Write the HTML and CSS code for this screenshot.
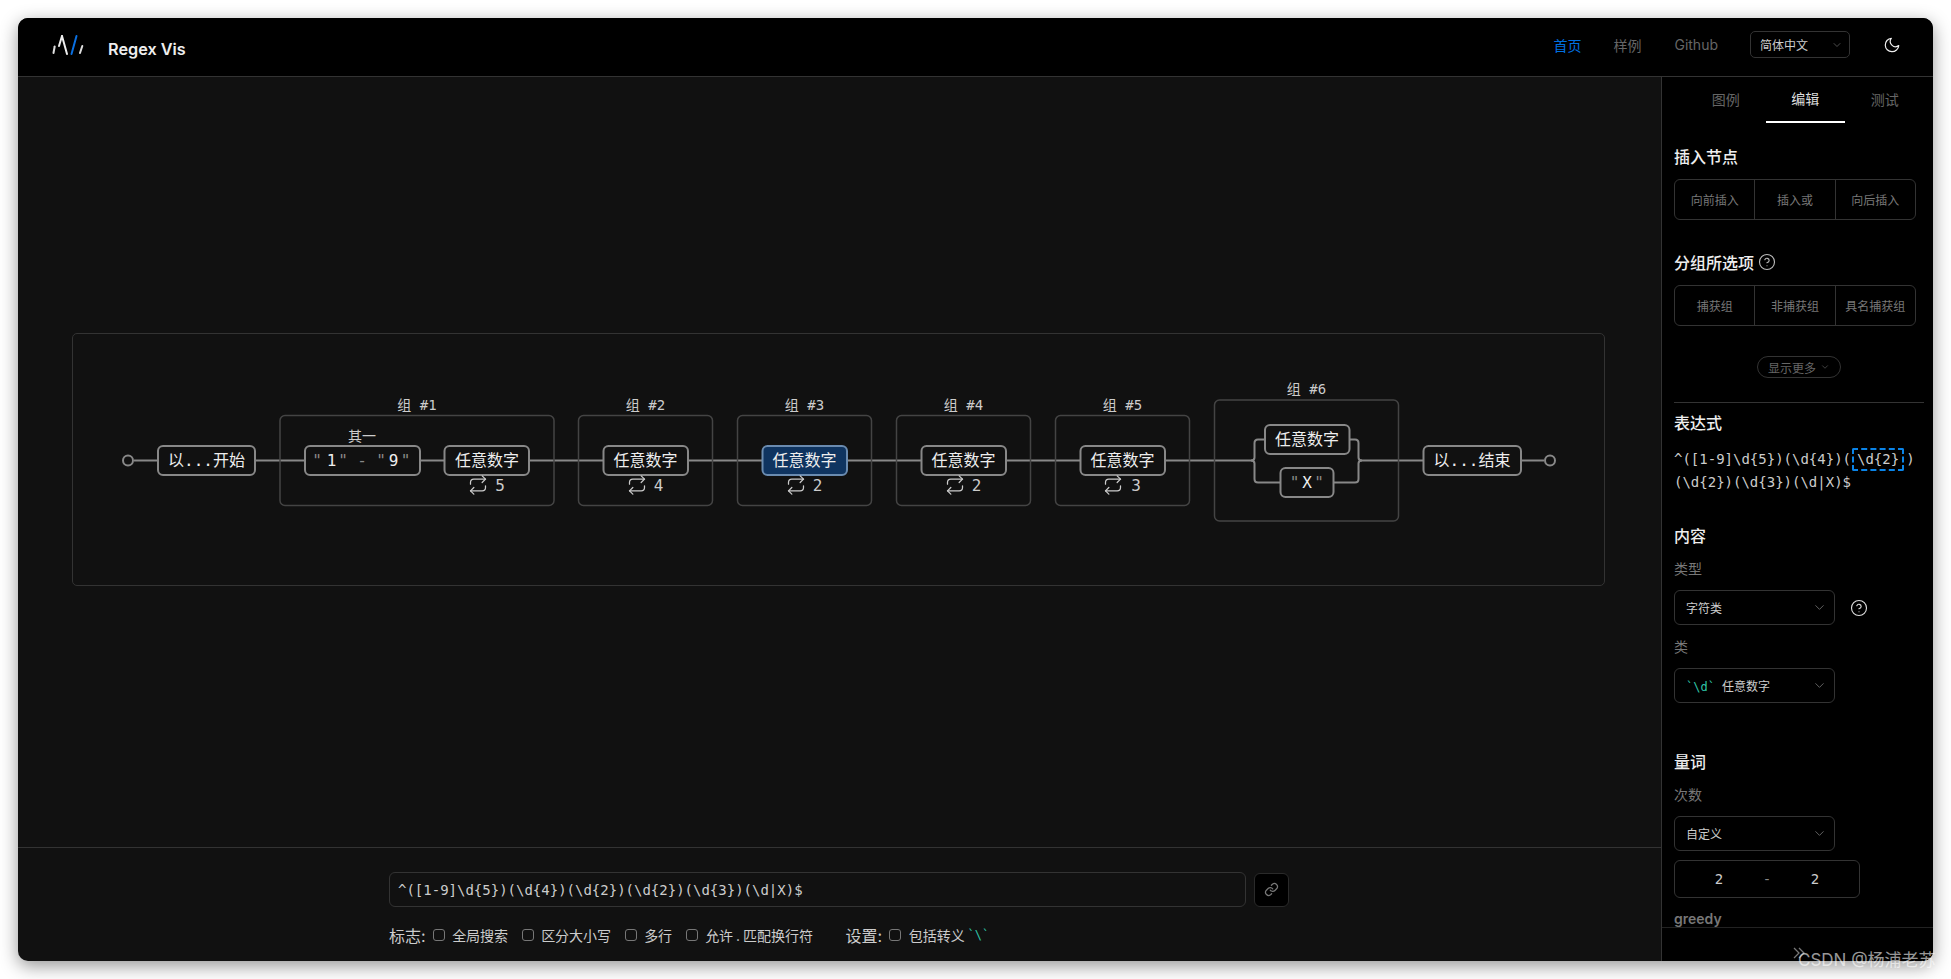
FILE: index.html
```html
<!DOCTYPE html>
<html lang="zh-CN">
  <head>
    <meta charset="utf-8">
    <title>Regex Vis</title>
    <link rel="stylesheet" href="styles.css">
  </head>
  <body>
    <svg class="defs" width="0" height="0">
      <symbol id="i-repeat" viewBox="0 0 24 24">
        <polyline points="17 1 21 5 17 9"></polyline>
        <path d="M3 11V9a4 4 0 0 1 4-4h14"></path>
        <polyline points="7 23 3 19 7 15"></polyline>
        <path d="M21 13v2a4 4 0 0 1-4 4H3"></path>
      </symbol>
      <symbol id="i-chevron" viewBox="0 0 24 24">
        <polyline points="6 9 12 15 18 9"></polyline>
      </symbol>
      <symbol id="i-help" viewBox="0 0 24 24">
        <circle cx="12" cy="12" r="10"></circle>
        <path d="M9.100 9a3 3 0 0 1 5.800 1c0 2-3 3-3 3"></path>
        <line x1="12" y1="17" x2="12" y2="17"></line>
      </symbol>
    </svg>

    <div class="window">
      <header class="topbar">
        <div class="brand">
          <svg class="logo" width="34" height="22" viewBox="0 0 34 22">
            <line x1="1.500" y1="19" x2="2.700" y2="12.500" stroke="#ddd"></line>
            <line x1="7" y1="12" x2="10" y2="2" stroke="#eee"></line>
            <line x1="10" y1="2" x2="15" y2="20" stroke="#eee"></line>
            <line x1="19.500" y1="20" x2="24.500" y2="2" stroke="#0a6fe0"></line>
            <line x1="28" y1="19" x2="30.300" y2="12" stroke="#ddd"></line>
          </svg>
          <span class="brand-name">Regex Vis</span>
        </div>
        <nav class="nav">
          <a class="nav-link active">首页</a>
          <a class="nav-link">样例</a>
          <a class="nav-link">Github</a>
          <div class="lang">
            <span>简体中文</span>
            <svg class="chevron" width="12" height="12"><use href="#i-chevron"></use></svg>
          </div>
          <svg class="moon" width="18" height="18" viewBox="0 0 24 24">
            <path d="M21 12.800A9 9 0 1 1 11.200 3a7 7 0 0 0 9.800 9.800z"></path>
          </svg>
        </nav>
      </header>

      <div class="content">
        <main class="main">
          <section class="canvas">
            <div class="graph-frame">
              <svg class="graph" width="1531" height="251" viewBox="73 334 1531 251">
                <!-- connecting lines run under the boxes -->
                <g class="wire">
                  <path d="M134 460.500H1251"></path>
                  <path d="M1362 460.500H1544"></path>
                  <path d="M1251 460.500c2 0 3.500-1 3.500-3V443c0-2.500 1-3.500 3.500-3.500h7"></path>
                  <path d="M1251 460.500c2 0 3.500 1 3.500 3V479c0 2.500 1 3.500 3.500 3.500h22.500"></path>
                  <path d="M1349.500 439.500h5.500c2.500 0 3.500 1 3.500 3.500v14.500c0 2 1.500 3 3.500 3"></path>
                  <path d="M1333.500 482.500H1355c2.500 0 3.500-1 3.500-3.500v-15.500c0-2 1.500-3 3.500-3"></path>
                </g>
                <circle class="terminal" cx="128" cy="460.500" r="5"></circle>
                <circle class="terminal" cx="1550" cy="460.500" r="5"></circle>

                <g class="group-box">
                  <rect x="280" y="415.500" width="274" height="90" rx="5"></rect>
                  <rect x="578.500" y="415.500" width="134" height="90" rx="5"></rect>
                  <rect x="737.500" y="415.500" width="134" height="90" rx="5"></rect>
                  <rect x="896.500" y="415.500" width="134" height="90" rx="5"></rect>
                  <rect x="1055.500" y="415.500" width="134" height="90" rx="5"></rect>
                  <rect x="1214.500" y="400" width="184" height="121" rx="5"></rect>
                </g>

                <g class="small-label">
                  <text x="417" y="410">组 #1</text>
                  <text x="362" y="441">其一</text>
                  <text x="645.500" y="410">组 #2</text>
                  <text x="804.500" y="410">组 #3</text>
                  <text x="963.500" y="410">组 #4</text>
                  <text x="1122.500" y="410">组 #5</text>
                  <text x="1306.500" y="393.500">组 #6</text>
                </g>

                <g class="node">
                  <rect x="158" y="446" width="97" height="29" rx="5"></rect>
                  <rect x="305" y="446" width="115" height="29" rx="5"></rect>
                  <rect x="444.500" y="446" width="84.500" height="29" rx="5"></rect>
                  <rect x="603.500" y="446" width="84.500" height="29" rx="5"></rect>
                  <rect class="selected" x="762.500" y="446" width="84.500" height="29" rx="5"></rect>
                  <rect x="921.500" y="446" width="84.500" height="29" rx="5"></rect>
                  <rect x="1080.500" y="446" width="84.500" height="29" rx="5"></rect>
                  <rect x="1265" y="425" width="84.500" height="29" rx="5"></rect>
                  <rect x="1280.500" y="468" width="53" height="29" rx="5"></rect>
                  <rect x="1423.500" y="446" width="97.500" height="29" rx="5"></rect>
                </g>

                <g class="node-text">
                  <text x="206.500" y="466">以...开始</text>
                  <text x="487" y="466">任意数字</text>
                  <text x="645.500" y="466">任意数字</text>
                  <text x="804.500" y="466">任意数字</text>
                  <text x="963.500" y="466">任意数字</text>
                  <text x="1122.500" y="466">任意数字</text>
                  <text x="1307" y="445">任意数字</text>
                  <text x="1472" y="466">以...结束</text>
                  <text y="466"><tspan class="dim" x="317">"</tspan><tspan x="331.500">1</tspan><tspan class="dim" x="343">"</tspan><tspan class="dim" x="362">-</tspan><tspan class="dim" x="381">"</tspan><tspan x="393.500">9</tspan><tspan class="dim" x="405.500">"</tspan></text>
                  <text y="488"><tspan class="dim" x="1294.500">"</tspan><tspan x="1307">X</tspan><tspan class="dim" x="1319">"</tspan></text>
                </g>

                <g class="icon-repeat">
                  <use href="#i-repeat" x="468" y="475" width="20" height="20"></use>
                  <use href="#i-repeat" x="627" y="475" width="20" height="20"></use>
                  <use href="#i-repeat" x="786" y="475" width="20" height="20"></use>
                  <use href="#i-repeat" x="945" y="475" width="20" height="20"></use>
                  <use href="#i-repeat" x="1103" y="475" width="20" height="20"></use>
                </g>
                <g class="repeat-count">
                  <text x="500" y="490.500">5</text>
                  <text x="658.500" y="490.500">4</text>
                  <text x="817.500" y="490.500">2</text>
                  <text x="976.500" y="490.500">2</text>
                  <text x="1136" y="490.500">3</text>
                </g>
              </svg>
            </div>
          </section>

          <section class="editor">
            <div class="editor-row">
              <input class="regex-input" type="text" value="^([1-9]\d{5})(\d{4})(\d{2})(\d{2})(\d{3})(\d|X)$">
              <button class="link-btn">
                <svg width="15" height="15" viewBox="0 0 24 24">
                  <path d="M10 13a5 5 0 0 0 7.500.5l3-3a5 5 0 0 0-7-7l-1.700 1.700"></path>
                  <path d="M14 11a5 5 0 0 0-7.500-.5l-3 3a5 5 0 0 0 7 7l1.700-1.700"></path>
                </svg>
              </button>
            </div>
            <div class="flags">
              <span class="flags-title">标志:</span>
              <label class="flag"><input type="checkbox">全局搜索</label>
              <label class="flag"><input type="checkbox">区分大小写</label>
              <label class="flag"><input type="checkbox">多行</label>
              <label class="flag"><input type="checkbox">允许 . 匹配换行符</label>
              <span class="flags-title settings">设置:</span>
              <label class="flag"><input type="checkbox">包括转义 <code class="green">`\`</code></label>
            </div>
          </section>
        </main>

        <aside class="sidebar">
          <div class="panel">
            <div class="tabs">
              <a class="tab">图例</a>
              <a class="tab current">编辑</a>
              <a class="tab">测试</a>
            </div>

            <h4 class="title first">插入节点</h4>
            <div class="btn-group">
              <button>向前插入</button>
              <button>插入或</button>
              <button>向后插入</button>
            </div>

            <h4 class="title second">分组所选项
              <svg class="help" width="18" height="18"><use href="#i-help"></use></svg>
            </h4>
            <div class="btn-group">
              <button>捕获组</button>
              <button>非捕获组</button>
              <button>具名捕获组</button>
            </div>

            <div class="more-wrap">
              <button class="more">显示更多
                <svg class="chevron" width="10" height="10"><use href="#i-chevron"></use></svg>
              </button>
            </div>
            <hr class="rule">

            <h4 class="title expr-title">表达式</h4>
            <div class="expr">^([1-9]\d{5})(\d{4})(<span class="expr-pick">\d{2}</span>)<br>(\d{2})(\d{3})(\d|X)$</div>

            <h4 class="title block-title">内容</h4>
            <div class="field-label">类型</div>
            <div class="field-row">
              <div class="picker">
                <span>字符类</span>
                <svg class="chevron" width="15" height="15"><use href="#i-chevron"></use></svg>
              </div>
              <svg class="help light" width="18" height="18"><use href="#i-help"></use></svg>
            </div>
            <div class="field-label spaced">类</div>
            <div class="picker">
              <span><code class="green">`\d`</code><span class="picker-note">任意数字</span></span>
              <svg class="chevron" width="15" height="15"><use href="#i-chevron"></use></svg>
            </div>

            <h4 class="title quant-title">量词</h4>
            <div class="field-label">次数</div>
            <div class="picker">
              <span>自定义</span>
              <svg class="chevron" width="15" height="15"><use href="#i-chevron"></use></svg>
            </div>
            <div class="range">
              <span>2</span>
              <span class="range-dash">-</span>
              <span>2</span>
            </div>
            <div class="greedy">greedy</div>
          </div>
          <footer class="collapse">
            <svg width="12" height="12" viewBox="0 0 12 12">
              <polyline points="1 1 6 6 1 11"></polyline>
              <polyline points="6 1 11 6 6 11"></polyline>
            </svg>
          </footer>
        </aside>
      </div>
    </div>

    <div class="watermark">CSDN @杨浦老苏</div>
  </body>
</html>
```

FILE: styles.css
```css
* {
  box-sizing: border-box;
}
html, body {
  height: 100%;
}
body {
  margin: 0;
  padding: 18px;
  background-color: #fff;
  font-family: "Inter", "Noto Sans CJK SC", sans-serif;
  overflow: hidden;
  position: relative;
}
button, input {
  font-family: inherit;
}
code {
  font-family: "DejaVu Sans Mono", monospace;
}
.defs {
  position: absolute;
}
symbol {
  fill: none;
  stroke: currentColor;
  stroke-width: 1.5;
  stroke-linecap: round;
  stroke-linejoin: round;
}

.window {
  height: 943px;
  display: flex;
  flex-direction: column;
  border-radius: 10px;
  overflow: hidden;
  background-color: #111;
  box-shadow: 0 5px 18px rgba(0, 0, 0, .42);
}

/* top bar */
.topbar {
  height: 59px;
  flex: none;
  display: flex;
  justify-content: space-between;
  align-items: center;
  background-color: #000;
  border-bottom: 1px solid #333;
  padding: 0 32px 0 34px;
}
.brand {
  display: flex;
  align-items: center;
  gap: 22px;
}
.logo {
  margin-bottom: 4px;
}
.logo line {
  stroke-width: 2;
  stroke-linecap: round;
}
.brand-name {
  margin-top: 4px;
  color: #eee;
  font-size: 16.250px;
  font-weight: 600;
}
.nav {
  display: flex;
  align-items: center;
  margin-bottom: 5px;
}
.nav-link {
  font-size: 14px;
  color: #666;
  margin-right: 33px;
}
.nav-link.active {
  color: #0070e0;
  margin-right: 32px;
}
.nav-link:nth-child(3) {
  margin-right: 32px;
}
.lang {
  width: 100px;
  height: 27px;
  display: flex;
  justify-content: space-between;
  align-items: center;
  border: 1px solid #333;
  border-radius: 5px;
  padding: 0 6px 0 9px;
  color: #ccc;
  font-size: 12px;
}
.chevron {
  color: #666;
}
.moon {
  margin-left: 33px;
  fill: none;
  stroke: #eee;
  stroke-width: 1.6;
  stroke-linecap: round;
  stroke-linejoin: round;
}

.content {
  flex: 1;
  display: flex;
  min-height: 0;
}
.main {
  flex: 1;
  display: flex;
  flex-direction: column;
  min-width: 0;
}

/* regex graph */
.canvas {
  flex: 1;
  display: flex;
  align-items: center;
  padding: 0 0 5px 54px;
}
.graph-frame {
  width: 1533px;
  height: 253px;
  border: 1px solid #333;
  border-radius: 5px;
}
.graph {
  display: block;
}
.graph text {
  font-family: "DejaVu Sans Mono", "Noto Sans CJK SC", monospace;
  text-anchor: middle;
}
.wire path {
  fill: none;
  stroke: #888;
  stroke-width: 2;
}
.terminal {
  fill: #111;
  stroke: #888;
  stroke-width: 2;
}
.group-box rect {
  fill: none;
  stroke: #444;
  stroke-width: 1.500;
}
.node rect {
  fill: #111;
  stroke: #888;
  stroke-width: 2;
}
.node rect.selected {
  fill: #0f3460;
  stroke: #6a8bb0;
}
.node-text text {
  fill: #eee;
  font-size: 16px;
}
.node-text .dim {
  fill: #888;
}
.small-label text {
  fill: #ccc;
  font-size: 14px;
}
.repeat-count text {
  fill: #ccc;
  font-size: 16px;
}
.icon-repeat {
  color: #ccc;
}

/* regex input and flags */
.editor {
  height: 114px;
  flex: none;
  border-top: 1px solid #333;
  padding: 24px 0 0 371px;
}
.editor-row {
  display: flex;
  align-items: center;
  gap: 8px;
}
.regex-input {
  width: 857px;
  height: 35px;
  background-color: #111;
  border: 1px solid #333;
  border-radius: 6px;
  padding: 0 8px;
  color: #ccc;
  font-family: "DejaVu Sans Mono", monospace;
  font-size: 14px;
}
.link-btn {
  width: 35px;
  height: 34px;
  display: flex;
  align-items: center;
  justify-content: center;
  background-color: #000;
  border: 1px solid #2a2a2a;
  border-radius: 6px;
  padding: 0;
}
.link-btn svg {
  fill: none;
  stroke: #777;
  stroke-width: 2;
  stroke-linecap: round;
  stroke-linejoin: round;
}
.flags {
  display: flex;
  align-items: center;
  margin-top: 16px;
  color: #ccc;
  font-size: 14px;
}
.flags-title {
  margin-right: 7px;
  font-size: 16px;
}
.settings {
  margin-left: 19px;
  margin-right: 7px;
}
.flag {
  display: flex;
  align-items: center;
  margin-right: 13.500px;
  white-space: pre;
  word-spacing: -1px;
}
.flag input {
  appearance: none;
  width: 12px;
  height: 12px;
  margin: 0 7.500px 0 0;
  background-color: #111;
  border: 1px solid #777;
  border-radius: 3px;
}
.flag code {
  font-size: 12px;
}
.green {
  color: #2fc4a8;
}

/* right panel */
.sidebar {
  width: 272px;
  flex: none;
  display: flex;
  flex-direction: column;
  background-color: #000;
  border-left: 1px solid #333;
}
.panel {
  flex: 1;
  min-height: 0;
  overflow: hidden;
  padding: 0 9px 0 12px;
}
.tabs {
  display: flex;
  height: 46px;
  margin-left: 12px;
}
.tab {
  width: 79.500px;
  flex: none;
  display: flex;
  align-items: center;
  justify-content: center;
  padding-bottom: 2px;
  color: #666;
  font-size: 14px;
}
.tab.current {
  color: #ddd;
  border-bottom: 2px solid #fff;
}
.title {
  margin: 0;
  display: flex;
  align-items: center;
  gap: 4px;
  height: 24px;
  padding-bottom: 2px;
  color: #eee;
  font-size: 16px;
  font-weight: 500;
}
.title.first {
  margin-top: 22px;
}
.title.second {
  margin-top: 31px;
}
.title.expr-title {
  margin-top: 8px;
}
.title.block-title {
  margin-top: 30px;
}
.title.quant-title {
  margin-top: 47px;
}
.btn-group {
  width: 242px;
  height: 41px;
  display: flex;
  margin-top: 10px;
  border: 1px solid #333;
  border-radius: 6px;
}
.btn-group button {
  flex: 1;
  background: none;
  border: none;
  border-left: 1px solid #333;
  padding: 0;
  color: #777;
  font-size: 12px;
}
.btn-group button:first-child {
  border-left: none;
}
.help {
  color: #bbb;
}
.help.light {
  color: #ddd;
}
.more-wrap {
  display: flex;
  justify-content: center;
  margin-top: 30px;
}
.more {
  width: 84px;
  height: 22px;
  display: flex;
  align-items: center;
  justify-content: center;
  gap: 4px;
  background: none;
  border: 1px solid #333;
  border-radius: 11px;
  padding: 0;
  color: #666;
  font-size: 12px;
}
.rule {
  height: 1px;
  margin: 24px 0 0;
  border: none;
  background-color: #333;
}
.expr {
  margin-top: 13px;
  line-height: 23px;
  color: #ccc;
  font-family: "DejaVu Sans Mono", monospace;
  font-size: 14px;
  white-space: nowrap;
}
.expr-pick {
  display: inline-block;
  height: 23px;
  line-height: 19px;
  margin: 0 2px 0 1px;
  padding: 0 3px;
  border: 2px dashed #0a84e8;
  border-radius: 2px;
  vertical-align: top;
}
.field-label {
  height: 22px;
  line-height: 22px;
  margin-top: 10px;
  color: #777;
  font-size: 14px;
}
.field-label.spaced {
  margin-top: 11px;
}
.field-row {
  display: flex;
  align-items: center;
  gap: 15px;
}
.picker {
  width: 161px;
  height: 35px;
  display: flex;
  justify-content: space-between;
  align-items: center;
  margin-top: 10px;
  border: 1px solid #333;
  border-radius: 6px;
  padding: 0 7px 0 11px;
  color: #ccc;
  font-size: 12px;
}
.field-row .help {
  margin-top: 10px;
}
.picker-note {
  margin-left: 7px;
}
.range {
  width: 186px;
  height: 38px;
  display: flex;
  justify-content: space-around;
  align-items: center;
  margin-top: 9px;
  border: 1px solid #333;
  border-radius: 6px;
  padding: 0 20px;
  color: #ccc;
  font-family: "DejaVu Sans Mono", monospace;
  font-size: 14px;
}
.range-dash {
  color: #888;
}
.greedy {
  margin-top: 13px;
  line-height: 16px;
  color: #777;
  font-size: 14px;
  font-weight: 600;
}
.collapse {
  height: 34px;
  flex: none;
  display: flex;
  align-items: center;
  padding: 16px 0 0 131px;
  border-top: 1px solid #222;
}
.collapse svg {
  fill: none;
  stroke: #777;
  stroke-width: 1.300;
}

/* image host stamp, sits above the window corner */
.watermark {
  position: absolute;
  left: 1798px;
  top: 948px;
  color: rgba(255, 255, 255, .6);
  font-size: 17px;
  line-height: 24px;
  white-space: nowrap;
}
```
